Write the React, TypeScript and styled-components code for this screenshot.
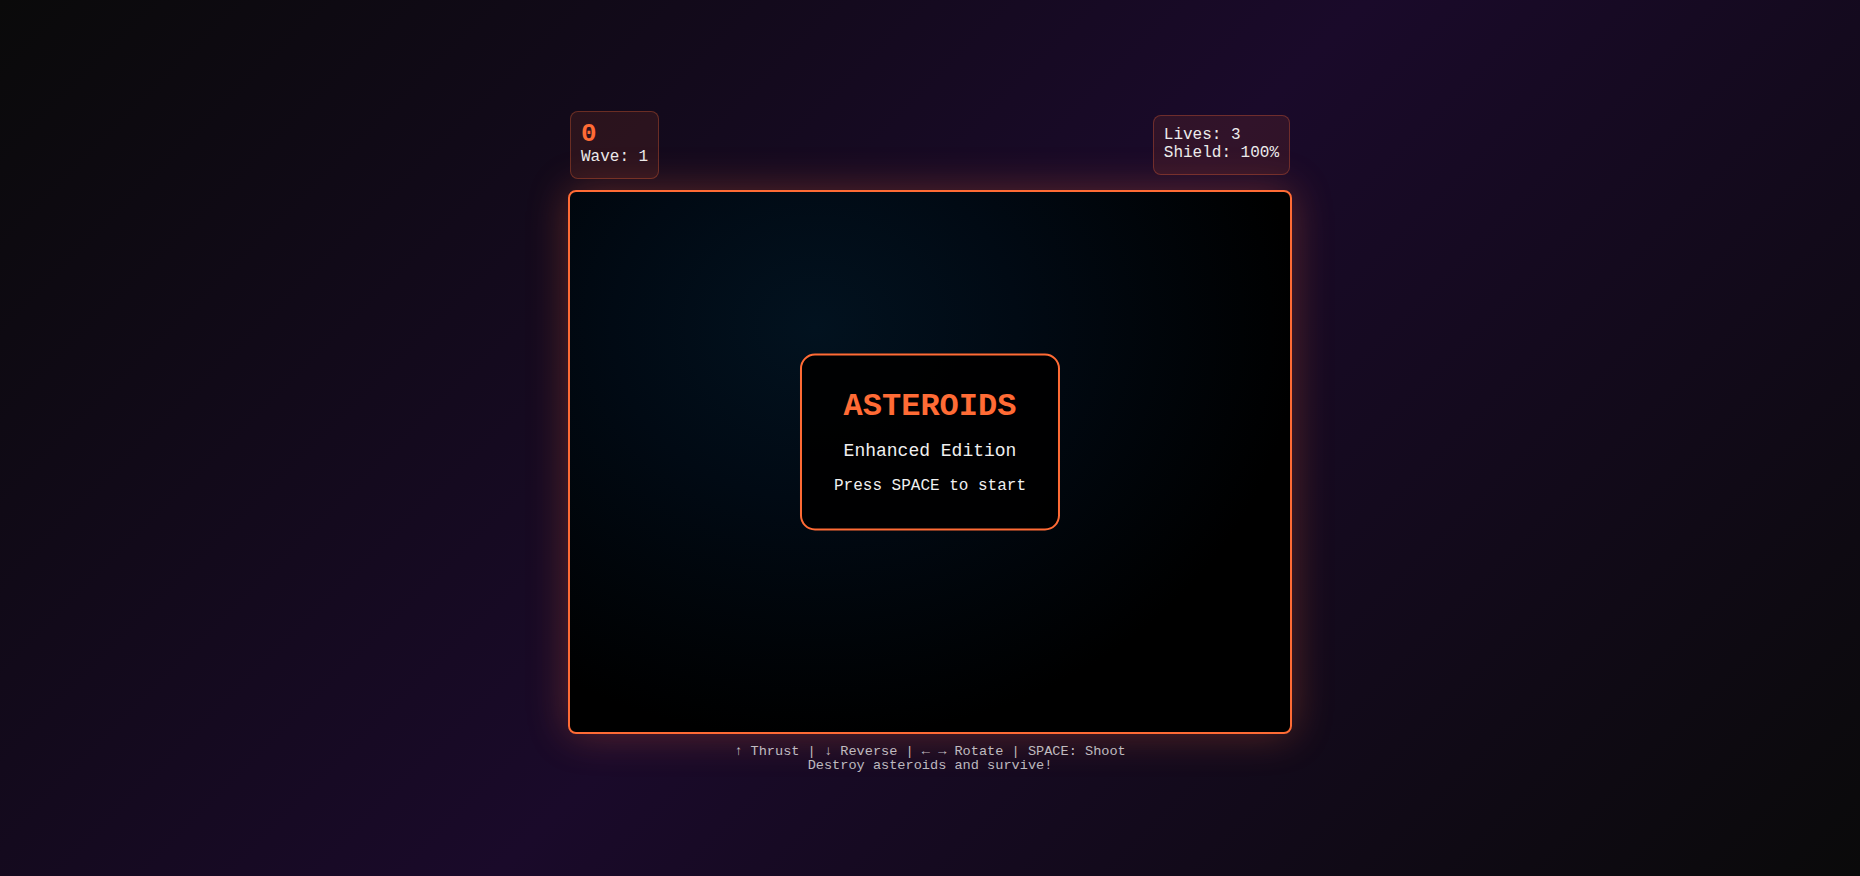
import React from "react";
import styled, { createGlobalStyle } from "styled-components";

const GlobalStyle = createGlobalStyle`
  html, body {
    margin: 0;
    padding: 0;
  }
  body {
    min-height: 100vh;
    background: linear-gradient(135deg, #0a0a0a 0%, #1a0a2a 50%, #0a0a0a 100%);
    font-family: "Courier New", "Liberation Mono", monospace;
    color: #e0e0e0;
    overflow: hidden;
  }
`;

const Page = styled.div`
  min-height: 100vh;
  box-sizing: border-box;
  display: flex;
  flex-direction: column;
  align-items: center;
  padding-top: 111px;
`;

const Game = styled.div`
  position: relative;
  width: 724px;
  display: flex;
  flex-direction: column;
`;

const Hud = styled.div`
  display: flex;
  justify-content: space-between;
  align-items: center;
  padding: 0 2px;
  margin-bottom: 11px;
`;

const StatBox = styled.div<{ $pad: string }>`
  background: rgba(255, 107, 53, 0.1);
  border: 1px solid rgba(255, 107, 53, 0.3);
  border-radius: 8px;
  padding: ${(p) => p.$pad};
  font-size: 16px;
  color: #ececec;
`;

const Score = styled.div`
  color: #ff6b35;
  font-size: 26px;
  line-height: 28px;
  font-weight: bold;
`;

const StatLine = styled.div`
  white-space: nowrap;
`;

const Screen = styled.div`
  width: 720px;
  height: 540px;
  border: 2px solid #ff6b35;
  border-radius: 8px;
  background: radial-gradient(
    ellipse at 34% 25%,
    #02121f 0%,
    #010a14 30%,
    #000000 72%
  );
  box-shadow: 0 0 40px rgba(255, 107, 53, 0.3);
`;

const Overlay = styled.div`
  position: absolute;
  top: 50%;
  left: 50%;
  transform: translate(-50%, -50%);
  background: rgba(0, 0, 0, 0.92);
  border: 2px solid #ff6b35;
  border-radius: 15px;
  padding: 32px 32px 34px;
  text-align: center;
  white-space: nowrap;
`;

const Title = styled.h1`
  margin: 0 0 16px;
  font-size: 32px;
  font-weight: bold;
  color: #ff6b35;
`;

const Subtitle = styled.p<{ $size: number; $gap?: number }>`
  margin: 0 0 ${(p) => p.$gap ?? 0}px;
  font-size: ${(p) => p.$size}px;
  color: #f0f0f0;
`;

const Instructions = styled.div`
  margin-top: 11px;
  text-align: center;
  font-size: 13.6px;
  line-height: 14px;
  color: rgba(255, 255, 255, 0.72);
`;

export default function App() {
  return (
    <>
      <GlobalStyle />
      <Page>
        <Game>
          <Hud>
            <StatBox $pad="8px 10px 12px">
              <Score>0</Score>
              <StatLine>Wave: 1</StatLine>
            </StatBox>
            <StatBox $pad="10px 10px 12px">
              <StatLine>Lives: 3</StatLine>
              <StatLine>Shield: 100%</StatLine>
            </StatBox>
          </Hud>
          <Screen />
          <Instructions>
            <div>↑ Thrust | ↓ Reverse | ← → Rotate | SPACE: Shoot</div>
            <div>Destroy asteroids and survive!</div>
          </Instructions>
          <Overlay>
            <Title>ASTEROIDS</Title>
            <Subtitle $size={18} $gap={16}>Enhanced Edition</Subtitle>
            <Subtitle $size={16}>Press SPACE to start</Subtitle>
          </Overlay>
        </Game>
      </Page>
    </>
  );
}
